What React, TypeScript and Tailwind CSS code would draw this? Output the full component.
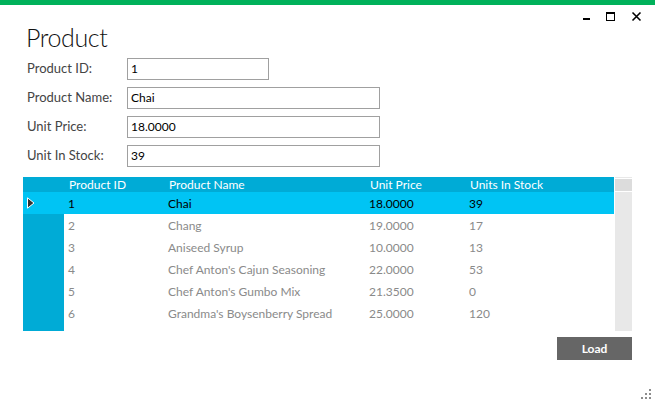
import React from "react";

const rows = [
  { id: "1", name: "Chai", price: "18.0000", stock: "39" },
  { id: "2", name: "Chang", price: "19.0000", stock: "17" },
  { id: "3", name: "Aniseed Syrup", price: "10.0000", stock: "13" },
  { id: "4", name: "Chef Anton's Cajun Seasoning", price: "22.0000", stock: "53" },
  { id: "5", name: "Chef Anton's Gumbo Mix", price: "21.3500", stock: "0" },
  { id: "6", name: "Grandma's Boysenberry Spread", price: "25.0000", stock: "120" },
];

function Field({ label, value, wide }: { label: string; value: string; wide?: boolean }) {
  return (
    <div className="flex items-center h-[22px]">
      <div className="w-[104px] pl-[4px] text-[13px] text-[#444]">{label}</div>
      <div
        className={`h-[22px] border border-[#a0a0a0] flex items-center pl-[3px] text-[12px] text-black ${
          wide ? "w-[253px]" : "w-[142px]"
        }`}
      >
        {value}
      </div>
    </div>
  );
}

export default function App() {
  return (
    <div
      className="w-[655px] h-[403px] bg-white relative overflow-hidden"
      style={{ fontFamily: "Lato, 'Open Sans', sans-serif" }}
    >
      <div className="h-[5px] bg-[#00b15a]" />

      {/* window controls */}
      <div className="absolute top-[11px] left-[582px]">
        <svg width="62" height="12" viewBox="0 0 62 12">
          <rect x="1" y="7" width="7" height="2" fill="#000" />
          <rect x="24.5" y="1.5" width="8" height="8" fill="none" stroke="#000" strokeWidth="1" />
          <rect x="24" y="1" width="9" height="2" fill="#000" />
          <path d="M50.5 1.5 L58.5 9.5 M58.5 1.5 L50.5 9.5" stroke="#000" strokeWidth="1.6" />
        </svg>
      </div>

      <div className="px-[23px]">
        <div className="pl-[3px] mt-[17px] h-[36px] text-[25px] leading-[30px] font-light tracking-[-0.4px] text-[#111]">
          Product
        </div>

        <div className="flex flex-col gap-[7px]">
          <Field label="Product ID:" value="1" />
          <Field label="Product Name:" value="Chai" wide />
          <Field label="Unit Price:" value="18.0000" wide />
          <Field label="Unit In Stock:" value="39" wide />
        </div>

        {/* grid */}
        <div className="mt-[10px] flex h-[154px]">
          <div className="w-[591px] flex flex-col text-[12px]">
            <div className="h-[15px] flex items-center bg-[#00abd6] text-white">
              <div className="w-[41px]" />
              <div className="w-[100px] pl-[5px]">Product ID</div>
              <div className="w-[201px] pl-[5px]">Product Name</div>
              <div className="w-[100px] pl-[5px]">Unit Price</div>
              <div className="flex-1 pl-[5px]">Units In Stock</div>
            </div>
            {rows.map((r, i) => {
              const sel = i === 0;
              return (
                <div
                  key={r.id}
                  className={`h-[22px] flex ${sel ? "bg-[#00c4f4] text-black" : "text-[#8a8a8a]"}`}
                >
                  <div
                    className={`w-[41px] flex items-center pl-[4px] ${sel ? "" : "bg-[#00abd6]"}`}
                  >
                    {sel && (
                      <svg width="8" height="12" viewBox="0 0 8 12">
                        <path d="M0.5 0.8 L7 6 L0.5 11.2 Z" fill="#333" stroke="#fff" strokeWidth="1" />
                      </svg>
                    )}
                  </div>
                  <div className="w-[100px] pl-[4px] flex items-center pt-[2px]">{r.id}</div>
                  <div className="w-[201px] pl-[4px] flex items-center pt-[2px]">{r.name}</div>
                  <div className="w-[100px] pl-[4px] flex items-center pt-[2px]">{r.price}</div>
                  <div className="flex-1 pl-[4px] flex items-center pt-[2px]">{r.stock}</div>
                </div>
              );
            })}
            <div className="flex-1 flex">
              <div className="w-[41px] bg-[#00abd6]" />
            </div>
          </div>
          <div className="w-[1px]" />
          <div className="w-[17px] flex flex-col">
            <div className="h-[1px] bg-[#e8e8e8]" />
            <div className="h-[1px]" />
            <div className="h-[12px] bg-[#dcdcdc]" />
            <div className="h-[1px]" />
            <div className="flex-1 bg-[#e8e8e8]" />
          </div>
        </div>

        <div className="mt-[6px] flex justify-end">
          <button className="w-[75px] h-[23px] bg-[#666666] text-white text-[12px] font-bold">
            Load
          </button>
        </div>
      </div>

      {/* resize grip */}
      <div className="absolute left-[641px] top-[389px]">
        <svg width="12" height="12" viewBox="0 0 12 12">
          <rect x="8" y="0" width="2" height="2" fill="#8c8c8c" />
          <rect x="4" y="4" width="2" height="2" fill="#8c8c8c" />
          <rect x="8" y="4" width="2" height="2" fill="#8c8c8c" />
          <rect x="0" y="8" width="2" height="2" fill="#8c8c8c" />
          <rect x="4" y="8" width="2" height="2" fill="#8c8c8c" />
          <rect x="8" y="8" width="2" height="2" fill="#8c8c8c" />
        </svg>
      </div>
    </div>
  );
}
